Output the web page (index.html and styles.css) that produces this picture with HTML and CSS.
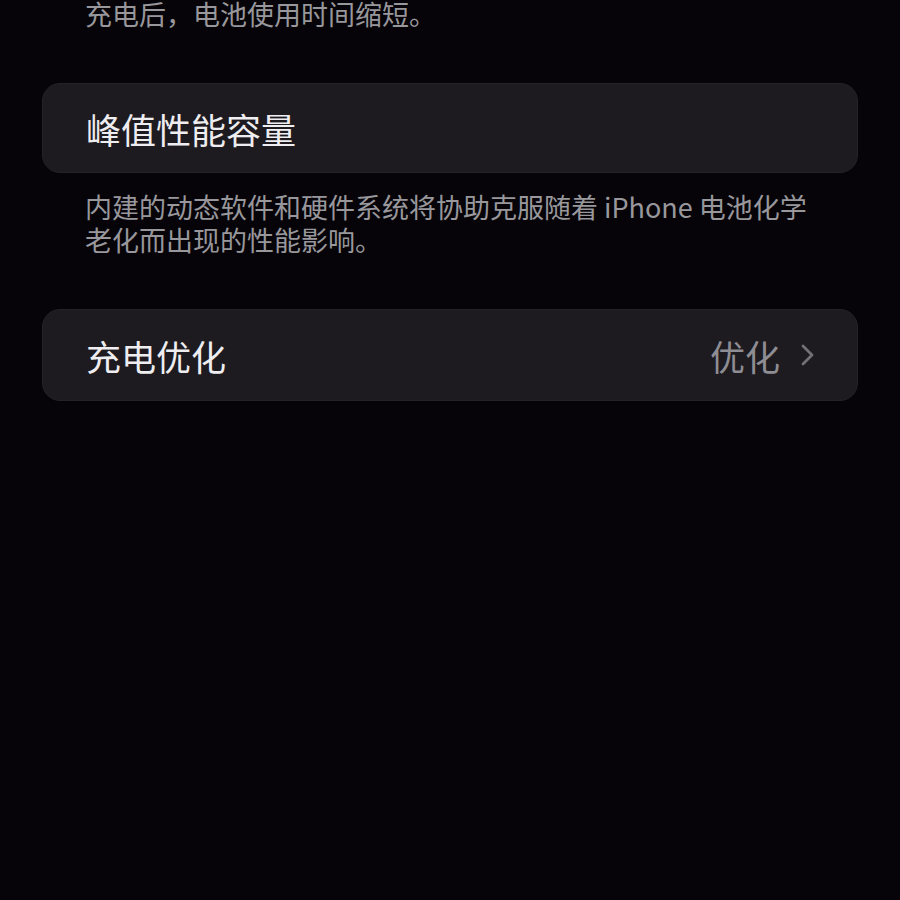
FILE: index.html
```html
<!DOCTYPE html>
<html lang="zh-CN">
<head>
    <meta charset="UTF-8">
    <meta name="viewport" content="width=device-width, initial-scale=1.0">
    <title>电池健康</title>
    <link rel="stylesheet" href="styles.css">
</head>
<body>
    <div class="pagina">
        <p class="nota nota-arriba">充电后，电池使用时间缩短。</p>

        <div class="tarjeta">
            <span class="titulo">峰值性能容量</span>
        </div>
        <p class="nota">内建的动态软件和硬件系统将协助克服随着 iPhone 电池化学<br>老化而出现的性能影响。</p>

        <div class="tarjeta tarjeta-opcion">
            <span class="titulo">充电优化</span>
            <span class="valor">
                优化
                <svg class="flecha" width="16" height="24" viewBox="0 0 16 24">
                    <path d="M4 3 L13 12 L4 21" fill="none" stroke="#707075" stroke-width="2.8" stroke-linecap="round" stroke-linejoin="round"/>
                </svg>
            </span>
        </div>
    </div>
</body>
</html>
```

FILE: styles.css
```css
body {
    margin: 0;
    height: 900px;
    overflow: hidden;
    background-color: #060408;
    font-family: "Noto Sans CJK SC", "Noto Sans", sans-serif;
}
.pagina {
    padding: 0 42px;
}
.nota {
    margin: 17px 0 0;
    padding-left: 43px;
    font-size: 27px;
    line-height: 33px;
    color: #98979c;
}
.nota-arriba {
    margin-top: -3px;
    margin-bottom: 53px;
}
.tarjeta {
    display: flex;
    align-items: center;
    justify-content: space-between;
    height: 90px;
    padding: 0 42px 0 43px;
    background-color: #1d1b20;
    border: 1px solid #242227;
    border-radius: 18px;
    box-sizing: border-box;
}
.tarjeta-opcion {
    margin-top: 53px;
    height: 92px;
}
.titulo {
    font-size: 35px;
    color: #eeedf0;
}
.valor {
    display: flex;
    align-items: center;
    gap: 19px;
    font-size: 35px;
    color: #8e8d93;
}
.flecha {
    display: block;
}
```
